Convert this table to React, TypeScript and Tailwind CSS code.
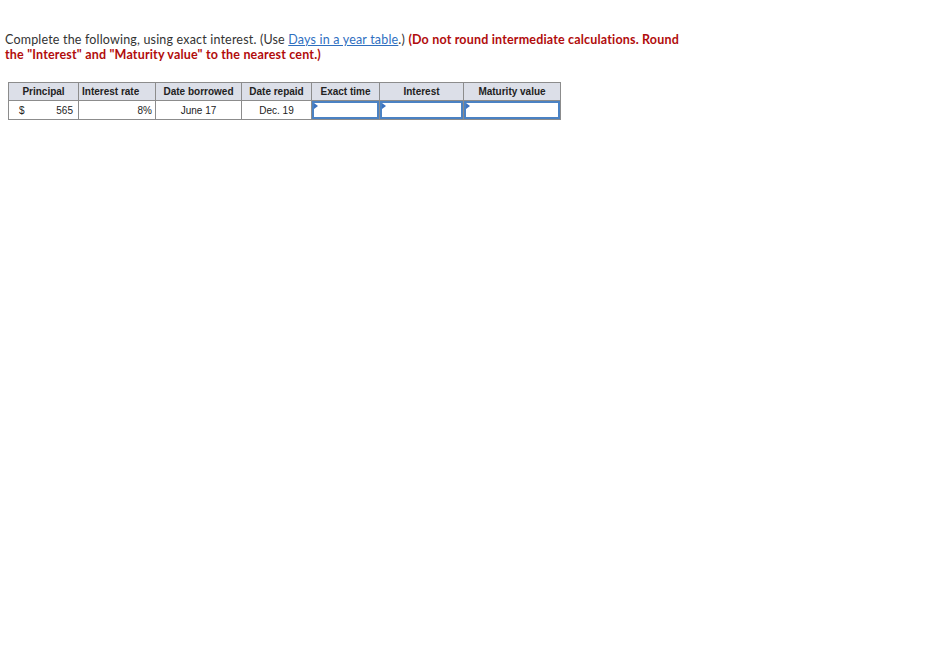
import React from 'react';

const headers = [
  { label: 'Principal', w: 'w-[70px]', align: 'text-center' },
  { label: 'Interest rate', w: 'w-[77px]', align: 'text-left' },
  { label: 'Date borrowed', w: 'w-[86px]', align: 'text-center' },
  { label: 'Date repaid', w: 'w-[70px]', align: 'text-center' },
  { label: 'Exact time', w: 'w-[68px]', align: 'text-center' },
  { label: 'Interest', w: 'w-[84px]', align: 'text-center' },
  { label: 'Maturity value', w: 'w-[97px]', align: 'text-center' },
];

function AnswerCell() {
  return (
    <td className="border border-[#8c8c8c] p-0 h-[18px]">
      <div className="relative h-[18px] border-2 border-[#4b82c3] bg-white">
        {/* little blue marker in the corner */}
        <span className="absolute left-0 top-0 w-0 h-0 border-t-[3px] border-b-[3px] border-l-[4px] border-t-transparent border-b-transparent border-l-[#3b72c0]" />
      </div>
    </td>
  );
}

export default function App() {
  return (
    <div className="min-h-[669px] w-[928px] bg-white pt-[32px] pl-[5px]">
      {/* Instructions */}
      <p className="text-[12.5px] leading-[15px] tracking-[0.18px] text-[#333] font-['Lato',sans-serif] max-w-[678px]">
        Complete the following, using exact interest. (Use{' '}
        <span className="text-[#2f6fbf] underline">Days in a year table</span>.){' '}
        <span className="font-bold text-[#b10c0c]">
          (Do not round intermediate calculations. Round the "Interest" and "Maturity value" to the nearest cent.)
        </span>
      </p>

      {/* Table */}
      <table className="mt-[20px] ml-[3px] border-collapse font-['Liberation_Sans',Arial,sans-serif] text-[10px] text-[#222] table-fixed">
        <thead>
          <tr className="bg-[#dcdfe8]">
            {headers.map((h) => (
              <th
                key={h.label}
                className={`border border-[#8c8c8c] h-[18px] px-[3px] font-bold ${h.w} ${h.align}`}
              >
                {h.label}
              </th>
            ))}
          </tr>
        </thead>
        <tbody>
          <tr className="bg-white">
            <td className="border border-[#8c8c8c] h-[18px] px-[5px]">
              <div className="flex justify-between pl-[5px]">
                <span>$</span>
                <span>565</span>
              </div>
            </td>
            <td className="border border-[#8c8c8c] px-[3px] text-right">8%</td>
            <td className="border border-[#8c8c8c] text-center">June 17</td>
            <td className="border border-[#8c8c8c] text-center">Dec. 19</td>
            <AnswerCell />
            <AnswerCell />
            <AnswerCell />
          </tr>
        </tbody>
      </table>
    </div>
  );
}
